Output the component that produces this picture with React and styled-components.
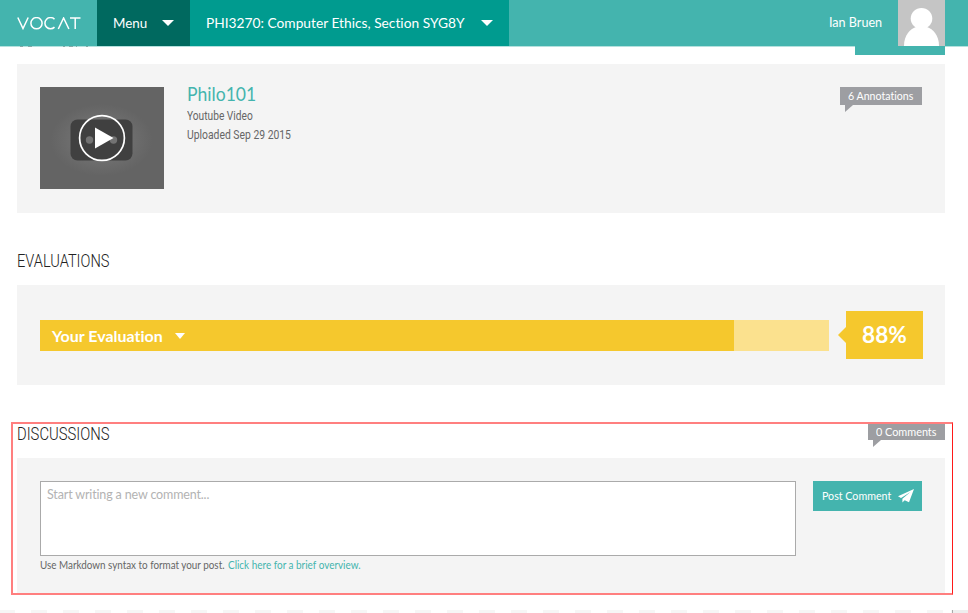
import React from 'react';
import styled, { createGlobalStyle } from 'styled-components';

const Global = createGlobalStyle`
  * { box-sizing: border-box; }
  html, body { margin: 0; background: #fff; overflow: hidden; }
  body { font-family: Lato, "Liberation Sans", sans-serif; color: #666; font-variant-ligatures: none; }
  #root { height: 613px; overflow: hidden; }
`;

const teal = '#44b4ae';

const Text = styled.span`
  display: block;
  white-space: nowrap;
  font-size: ${p => p.$size}px;
  line-height: ${p => p.$line || 18}px;
  font-weight: ${p => p.$weight || 400};
  color: ${p => p.$color || 'inherit'};
  transform: scaleX(${p => p.$fit || 1});
  transform-origin: left center;
`;

const Condensed = styled(Text)`
  font-family: Roboto, sans-serif;
`;

const Page = styled.div`
  width: 968px;
  height: 613px;
  display: flex;
  flex-direction: column;
`;

const Header = styled.header`
  flex: none;
  display: flex;
  height: 46px;
  background: ${teal};
  color: #fff;
`;

const Logo = styled.div`
  width: 97px;
  padding: 17px 0 0 17px;
  svg { display: block; }
`;

const NavItem = styled.div`
  display: flex;
  align-items: center;
  width: ${p => p.$width}px;
  padding: 0 16px;
  justify-content: space-between;
  background: ${p => p.$bg};
`;

const Caret = styled.span`
  width: 0;
  height: 0;
  border: ${p => p.$w || 6}px solid transparent;
  border-top: ${p => p.$h || 6}px solid #fff;
  border-bottom: 0;
`;

const User = styled.div`
  display: flex;
  align-items: center;
  margin-left: auto;
  margin-right: 23px;
`;

const UserName = styled.div`
  width: 69px;
`;

const UnderHeader = styled.div`
  flex: none;
  display: flex;
  justify-content: space-between;
  height: 18px;
  padding-right: 23px;
  border-top: 1px solid #b4e1de;
  svg { display: block; margin: -1px 0 0 17px; }
`;

const HiddenButton = styled.div`
  width: 90px;
  height: 9px;
  margin-top: -1px;
  background: ${teal};
`;

const Panel = styled.section`
  display: flex;
  flex: none;
  margin: 0 23px 0 17px;
  width: 928px;
  height: ${p => p.$height}px;
  padding: ${p => p.$pad || '23px'};
  background: #f4f4f4;
`;

const Thumb = styled.div`
  width: 124px;
  height: 102px;
  svg { display: block; }
`;

const Details = styled.div`
  flex: 1;
  padding-left: 23px;
  margin-top: -5px;
`;

const Flag = styled.div`
  position: relative;
  width: ${p => p.$width}px;
  height: 18px;
  padding-left: 8px;
  background: #9d9ea2;
  color: #fff;
  &::after {
    content: '';
    position: absolute;
    left: 5px;
    top: 100%;
    border-top: 7px solid #9d9ea2;
    border-right: 8px solid transparent;
  }
`;

const Heading = styled.div`
  height: ${p => p.$height}px;
  padding: ${p => p.$top}px 0 0 17px;
`;

const Bar = styled.div`
  flex: none;
  width: 789px;
  height: 31px;
  background: #fbe18e;
`;

const Fill = styled.div`
  display: flex;
  align-items: center;
  gap: 12px;
  width: 694px;
  height: 31px;
  padding-left: 12px;
  background: #f5c82d;
`;

const Score = styled.div`
  flex: none;
  position: relative;
  width: 77px;
  height: 48px;
  margin: -9px 0 0 17px;
  padding: 0 0 0 16px;
  background: #f5c82d;
  &::before {
    content: '';
    position: absolute;
    left: -8px;
    top: 16px;
    border: 8px solid transparent;
    border-left: 0;
    border-right-color: #f5c82d;
  }
`;

const Discussion = styled.section`
  flex: none;
  position: relative;
  margin: 37px 0 0 11px;
  width: 942px;
  height: 173px;
  &::after {
    content: '';
    position: absolute;
    inset: 0;
    border: 2px solid #ff7f7f;
    border-right: 1px solid #ff1818;
    pointer-events: none;
  }
`;

const DiscussionTop = styled.div`
  display: flex;
  justify-content: space-between;
  height: 36px;
  padding: 0 8px 0 6px;
`;

const DiscussionPanel = styled(Panel)`
  margin-left: 6px;
`;

const Comment = styled.textarea`
  display: block;
  width: 756px;
  height: 75px;
  margin: 0;
  padding: 4px 6px;
  border: 1px solid #aaa;
  background: #fff;
  resize: none;
  outline: none;
  font: 12.5px/18px Lato, sans-serif;
  font-variant-ligatures: none;
  letter-spacing: -0.15px;
  &::placeholder { color: #b3b3b3; opacity: 1; }
`;

const Hint = styled.p`
  margin: 0;
  display: flex;
`;

const HintPart = styled.span`
  width: 188px;
`;

const Post = styled.button`
  display: flex;
  align-items: center;
  width: 109px;
  height: 30px;
  margin: 0 0 0 17px;
  padding: 0 0 0 9px;
  border: 0;
  background: ${teal};
  color: #fff;
  font-family: inherit;
  text-align: left;
`;

const PostLabel = styled.span`
  width: 76px;
`;

const Footer = styled.div`
  display: flex;
  height: 3px;
  margin-top: 15px;
`;

const Dashes = styled.div`
  width: 952px;
  background: repeating-linear-gradient(90deg, #f6f6f6 0 16px, #fff 16px 32px);
  background-position: -1px 0;
`;

const Corner = styled.div`
  flex: 1;
  border-left: 1px solid #aaa;
  background: #eee;
`;

export default function App() {
  return (
    <Page>
      <Global />
      <Header>
        <Logo>
          <svg width="64" height="13" viewBox="0 0 64 13" fill="none" stroke="#fff" strokeWidth="1.5" role="img" aria-label="VOCAT">
            <path d="M.8 .5 6 11.5 11.2 .5M37.5 10.1A5.6 5.6 0 1 1 37.5 2.2M41.3 12 46.6 1 51.9 12M53 1h10.5M58.2 1v11" />
            <circle cx="19.5" cy="6.2" r="5.6" />
          </svg>
        </Logo>
        <NavItem $width={93} $bg="#00695f">
          <Text $size={13.8} $fit={0.97}>Menu</Text><Caret />
        </NavItem>
        <NavItem $width={319} $bg="#009b8f">
          <Text $size={13.8} $fit={0.997}>PHI3270: Computer Ethics, Section SYG8Y</Text><Caret />
        </NavItem>
        <User>
          <UserName><Text $size={12.6}>Ian Bruen</Text></UserName>
          <svg width="47" height="46" viewBox="0 0 47 46">
            <path fill="#c5c5c5" d="M0 0h47v46H0z" />
            <ellipse cx="23.5" cy="18.5" rx="10.8" ry="10.6" fill="#fff" />
            <path fill="#fff" d="M6 46C6 35 12 29 18 27h11c6 2 12 8 12 19z" />
          </svg>
        </User>
      </Header>
      <UnderHeader>
        <svg width="74" height="1" viewBox="0 0 74 1">
          <path stroke="#83aaa7" d="M3 .5h3M11 .5h4M46 .5h2M52 .5h4M59 .5h1M69 .5h2" />
        </svg>
        <HiddenButton />
      </UnderHeader>
      <Panel $height={149}>
        <Thumb>
          <svg width="124" height="102" viewBox="0 0 124 102">
            <defs>
              <radialGradient id="glow"><stop offset=".5" stopColor="#707070" /><stop offset="1" stopColor="#646464" /></radialGradient>
            </defs>
            <path fill="#646464" d="M0 0h124v102H0z" />
            <ellipse cx="61.5" cy="53" rx="51" ry="36" fill="url(#glow)" />
            <rect x="30.5" y="32.5" width="62" height="41" rx="7" fill="#404040" />
            <circle cx="49.5" cy="53" r="3.7" fill="#737373" />
            <circle cx="73.5" cy="53" r="3.7" fill="#737373" />
            <circle cx="62" cy="51" r="22.4" fill="none" stroke="#fff" strokeWidth="1.7" />
            <path d="M55 40.5v21L73.5 51z" fill="#fff" />
          </svg>
        </Thumb>
        <Details>
          <Text $size={19} $fit={0.925} $line={24} $color={teal}>Philo101</Text>
          <Condensed $size={12.6} $fit={0.81} $line={19}>Youtube Video</Condensed>
          <Condensed $size={12.6} $fit={0.823} $line={19}>Uploaded Sep 29 2015</Condensed>
        </Details>
        <Flag $width={82}><Text $size={11} $fit={0.965}>6 Annotations</Text></Flag>
      </Panel>
      <Heading $height={72} $top={36}>
        <Condensed $size={17.6} $weight={300} $fit={0.83} $line={24} $color="#222">EVALUATIONS</Condensed>
      </Heading>
      <Panel $height={100} $pad="35px 23px">
        <Bar>
          <Fill>
            <Text $size={16} $weight={700} $line={20} $color="#fff">Your Evaluation</Text>
            <Caret $w={5.5} />
          </Fill>
        </Bar>
        <Score><Text $size={22.2} $weight={700} $fit={1.02} $line={48} $color="#fff">88%</Text></Score>
      </Panel>
      <Discussion>
        <DiscussionTop>
          <Condensed $size={17.6} $weight={300} $fit={0.84} $line={24} $color="#222">DISCUSSIONS</Condensed>
          <Flag $width={77}><Text $size={11} $fit={0.985} $line={19}>0 Comments</Text></Flag>
        </DiscussionTop>
        <DiscussionPanel $height={135}>
          <div>
            <Comment placeholder="Start writing a new comment..." />
            <Hint>
              <HintPart><Text $size={10.5} $fit={0.938} $line={18}>Use Markdown syntax to format your post.</Text></HintPart>
              <Text $size={10.5} $fit={0.946} $line={18} $color={teal}>Click here for a brief overview.</Text>
            </Hint>
          </div>
          <Post>
            <PostLabel><Text $size={11} $fit={0.97}>Post Comment</Text></PostLabel>
            <svg width="16" height="14" viewBox="0 0 16 14" fill="#fff">
              <path d="M16 0 0 7.2l3 1.8L12.5 3 4.4 9.8v3.7l2.3-2.3 4.3 2z" />
            </svg>
          </Post>
        </DiscussionPanel>
      </Discussion>
      <Footer><Dashes /><Corner /></Footer>
    </Page>
  );
}
